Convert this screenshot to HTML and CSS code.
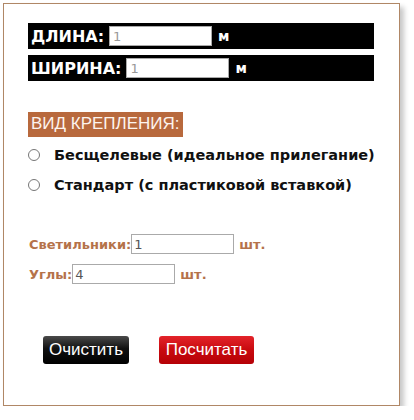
FILE: index.html
```html
<!DOCTYPE html>
<html lang="ru">
<head>
  <meta charset="UTF-8" />
  <title>Калькулятор потолка</title>
  <link rel="stylesheet" href="styles.css">
</head>
<body>

  <div class="calc">

    <!-- Размеры -->
    <div class="size-row">
      <span class="size-label">ДЛИНА:</span>
      <input type="text" class="size-input" value="1">
      <span class="size-unit">м</span>
    </div>
    <div class="size-row">
      <span class="size-label">ШИРИНА:</span>
      <input type="text" class="size-input" value="1">
      <span class="size-unit">м</span>
    </div>

    <!-- Вид крепления -->
    <div class="mount-title">ВИД КРЕПЛЕНИЯ:</div>
    <label class="mount-option">
      <input type="radio" name="mount" class="mount-radio">
      <span>Бесщелевые (идеальное прилегание)</span>
    </label>
    <label class="mount-option">
      <input type="radio" name="mount" class="mount-radio">
      <span>Стандарт (с пластиковой вставкой)</span>
    </label>

    <!-- Доп. параметры -->
    <div class="extra-row first">
      <span class="extra-label">Светильники:</span>
      <input type="text" class="extra-input" value="1">
      <span class="extra-unit">шт.</span>
    </div>
    <div class="extra-row">
      <span class="extra-label">Углы:</span>
      <input type="text" class="extra-input" value="4">
      <span class="extra-unit">шт.</span>
    </div>

    <div class="buttons">
      <button class="btn btn-clear">Очистить</button>
      <button class="btn btn-calc">Посчитать</button>
    </div>

  </div>

</body>
</html>
```

FILE: styles.css
```css
body {
  margin: 0;
  background-color: #fff;
  font-family: "DejaVu Sans", Verdana, sans-serif;
}
.calc {
  margin: 3px 0 0 3px;
  width: 397px;
  height: 403px;
  border: 1px solid #b08766;
  box-shadow: 4px 4px 5px rgba(0, 0, 0, 0.22);
  padding: 19px 0 0 24px;
  box-sizing: border-box;
}
.size-row {
  display: flex;
  align-items: center;
  width: 346px;
  height: 26px;
  background-color: #000;
  color: #fff;
  margin-bottom: 6px;
}
.size-label {
  font-size: 16px;
  font-weight: bold;
  padding-left: 3px;
}
.size-input {
  width: 103px;
  height: 20px;
  box-sizing: border-box;
  margin: 0 0 0 5px;
  padding: 1px 3px;
  border: 1px solid #aaa;
  font-family: "DejaVu Sans", Verdana, sans-serif;
  font-size: 13px;
  color: #999;
}
.size-unit {
  font-size: 14px;
  font-weight: bold;
  margin-left: 6px;
}
.mount-title {
  display: inline-block;
  margin-top: 25px;
  padding: 2px 3px 3px 3px;
  background-color: #b8693d;
  color: #fdf4ee;
  font-family: "Liberation Sans", Arial, sans-serif;
  font-size: 17px;
  line-height: 20px;
}
.mount-option {
  display: flex;
  align-items: center;
  height: 30px;
  font-size: 14.5px;
  font-weight: bold;
  color: #111;
}
.mount-option:first-of-type {
  margin-top: 3px;
}
.mount-radio {
  width: 12px;
  height: 12px;
  margin: 0 14px 0 0;
  accent-color: #999;
}
.extra-row {
  display: flex;
  align-items: center;
  height: 20px;
  margin-top: 10px;
}
.extra-row.first {
  margin-top: 34px;
}
.extra-label {
  font-size: 13px;
  font-weight: bold;
  color: #b5724a;
  margin-left: 1px;
}
.extra-input {
  width: 103px;
  height: 20px;
  box-sizing: border-box;
  margin: 0;
  padding: 1px 2px;
  border: 1px solid #aaa;
  font-family: "DejaVu Sans", Verdana, sans-serif;
  font-size: 13px;
  color: #555;
}
.extra-unit {
  font-size: 13px;
  font-weight: bold;
  color: #b5724a;
  margin-left: 5px;
}
.buttons {
  display: flex;
  gap: 30px;
  margin: 52px 0 0 15px;
}
.btn {
  height: 28px;
  padding: 0 4px;
  border: none;
  border-radius: 3px;
  color: #fff;
  font-family: "Liberation Sans", Arial, sans-serif;
  font-size: 17px;
  cursor: pointer;
}
.btn-clear {
  width: 86px;
  background: linear-gradient(to bottom, #4a4a4a 0%, #111 45%, #000 100%);
}
.btn-calc {
  width: 95px;
  background: linear-gradient(to bottom, #e3232a 0%, #c80a0f 50%, #b50006 100%);
}
```
